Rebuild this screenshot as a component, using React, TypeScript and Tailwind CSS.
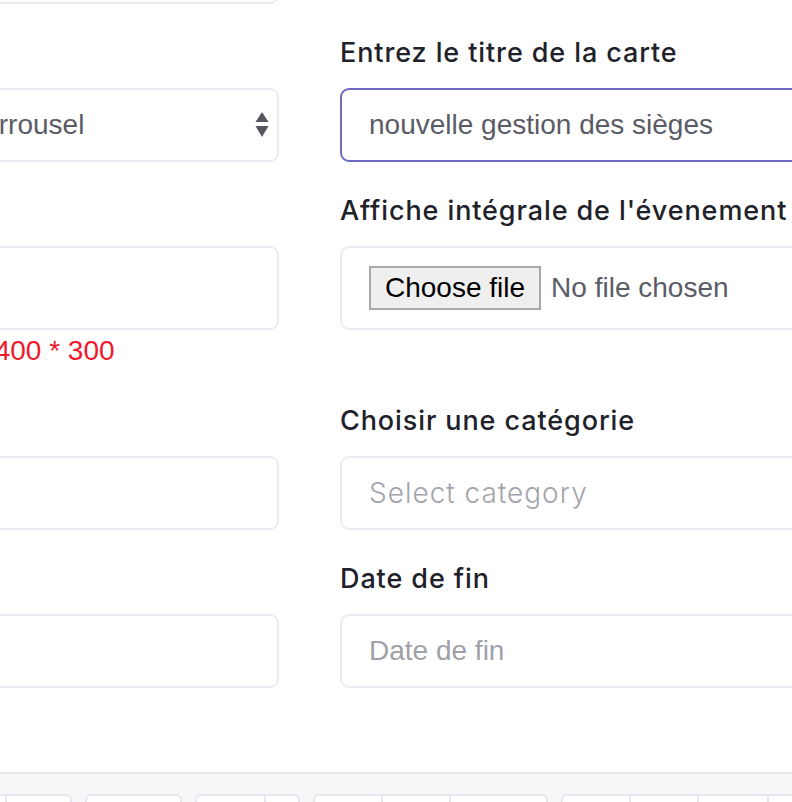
import React from 'react';

const labelCls = "block text-[27px] leading-[36px] font-medium tracking-[0.9px] text-[#212229] mb-[17px] font-['Inter',sans-serif] whitespace-nowrap";
const baseBox = "w-full h-[74px] rounded-[9px] border-2 bg-white px-[27px] text-[28px] font-['Liberation_Sans',Arial,sans-serif] text-[#5a5c66] outline-none";
const boxCls = `${baseBox} border-[#ebebf1]`;

const SelectArrows = () => (
    <svg width="14" height="26" viewBox="0 0 14 26" className="shrink-0">
        <path d="M7 0 L13.5 10 L0.5 10 Z" fill="#55565e" />
        <path d="M0.5 14 L13.5 14 L7 25 Z" fill="#55565e" />
    </svg>
);

const Field = ({ label, children }: { label: string; children: React.ReactNode }) => (
    <div className="mb-[31px]">
        <label className={labelCls}>{label}</label>
        {children}
    </div>
);

// button group tops peeking in at the bottom toolbar
const Group = ({ widths }: { widths: number[] }) => (
    <div className="flex shrink-0 h-[30px] bg-white border-2 border-[#e6e7ee] rounded-t-[6px]">
        {widths.map((w, i) => (
            <div key={i} className={i > 0 ? 'shrink-0 border-l-2 border-[#e6e7ee]' : 'shrink-0'} style={{ width: w }}></div>
        ))}
    </div>
);

const App = () => {
    return (
        <div className="w-[792px] h-[802px] overflow-hidden bg-white flex flex-col">
            {/* Form */}
            <div className="-mt-[123px] -ml-[66px] grid grid-cols-[345px_520px] gap-x-[61px] pb-[53px]">
                {/* Row 0 */}
                <Field label={'\u00a0'}>
                    <div className={boxCls}></div>
                </Field>
                <div></div>

                {/* Row 1 */}
                <Field label={'\u00a0'}>
                    <div className={`${boxCls} flex items-center justify-between pr-[8px]`}>
                        <span>Carrousel</span>
                        <SelectArrows />
                    </div>
                </Field>
                <Field label="Entrez le titre de la carte">
                    <input
                        readOnly
                        defaultValue="nouvelle gestion des sièges"
                        className={`${baseBox} border-[#6f6bc4]`}
                    />
                </Field>

                {/* Row 2 */}
                <div className="mb-[31px]">
                    <label className={labelCls}>{'\u00a0'}</label>
                    <div className={`${boxCls} h-[84px]`}></div>
                    <p className="text-[28px] leading-[42px] text-[#f0192b] font-['Liberation_Sans',Arial,sans-serif]">
                        Max 400 * 300
                    </p>
                </div>
                <Field label="Affiche intégrale de l'évenement">
                    <div className={`${boxCls} h-[84px] flex items-center gap-[10px]`}>
                        <span className="h-[44px] px-[14px] flex items-center bg-[#efefef] border-2 border-[#a9a9a9] text-black text-[28px]">
                            Choose file
                        </span>
                        <span>No file chosen</span>
                    </div>
                </Field>

                {/* Row 3 */}
                <Field label={'\u00a0'}>
                    <div className={boxCls}></div>
                </Field>
                <Field label="Choisir une catégorie">
                    <div className={`${boxCls} flex items-center`}>
                        <span className="font-['Inter',sans-serif] font-light text-[28px] tracking-[1px] text-[#a3a4ab]">Select category</span>
                    </div>
                </Field>

                {/* Row 4 */}
                <Field label={'\u00a0'}>
                    <div className={boxCls}></div>
                </Field>
                <Field label="Date de fin">
                    <input
                        readOnly
                        placeholder="Date de fin"
                        className={`${boxCls} placeholder:text-[#a0a1a8]`}
                    />
                </Field>
            </div>

            {/* Footer toolbar */}
            <div className="flex-1 border-t-2 border-[#e8e9ef] bg-[#f6f7f9] pt-[20px]">
                <div className="-ml-[60px] flex gap-[13px]">
                    <Group widths={[63, 65]} />
                    <Group widths={[93]} />
                    <Group widths={[67, 34]} />
                    <Group widths={[66, 68, 97]} />
                    <Group widths={[66, 68, 70, 82]} />
                </div>
            </div>
        </div>
    );
};

export default App;
